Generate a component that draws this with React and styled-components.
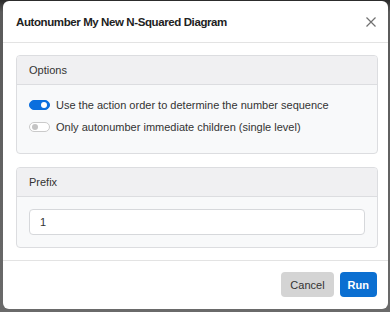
import React from 'react'
import styled, { createGlobalStyle } from 'styled-components'

const GlobalStyle = createGlobalStyle`
  html, body {
    margin: 0;
    padding: 0;
    background: #4d4d4d;
    font-family: "Liberation Sans", Arial, sans-serif;
  }
`

const Backdrop = styled.div`
  width: 390px;
  height: 312px;
  padding: 1px 2px 3px 3px;
  box-sizing: border-box;
  background: linear-gradient(180deg, #2a2a2a 0px, #5a5a5a 12px, #6a6a6a 100%);
`

const Modal = styled.div`
  height: 100%;
  background: #fff;
  border-radius: 6px;
  display: flex;
  flex-direction: column;
  overflow: hidden;
`

const Header = styled.div`
  height: 41px;
  display: flex;
  align-items: center;
  justify-content: space-between;
  padding: 0 12px 0 13px;
  border-bottom: 1px solid #e3e3e3;
`

const Title = styled.h1`
  margin: 0;
  font-size: 11.5px;
  font-weight: bold;
  letter-spacing: -0.4px;
  color: #222;
`

const Close = styled.button`
  border: none;
  background: none;
  padding: 0;
  width: 10px;
  height: 10px;
  display: flex;
`

const Body = styled.div`
  flex: 1;
  padding: 12px 10px 12px 13px;
  display: flex;
  flex-direction: column;
  gap: 13px;
`

const Card = styled.div`
  border: 1px solid #dcdde0;
  border-radius: 4px;
  background: #f8f9fa;
  overflow: hidden;
`

const CardHeader = styled.div`
  height: 28px;
  display: flex;
  align-items: center;
  padding: 0 12px;
  background: #f0f0f2;
  border-bottom: 1px solid #dcdde0;
  font-size: 11px;
  color: #333;
`

const CardBody = styled.div`
  padding: ${(p) => p.$pad || '12px'};
  display: flex;
  flex-direction: column;
  gap: ${(p) => p.$gap || '0'};
`

const Row = styled.label`
  display: flex;
  align-items: center;
  gap: 6px;
  font-size: 11px;
  color: #333;
  height: 16px;
`

const Toggle = styled.span`
  flex: none;
  width: 21px;
  height: 10px;
  border-radius: 6px;
  box-sizing: border-box;
  position: relative;
  background: ${(p) => (p.$on ? '#0b6fde' : '#fff')};
  border: 1px solid ${(p) => (p.$on ? '#0b6fde' : '#cacaca')};

  &::after {
    content: '';
    position: absolute;
    top: 1px;
    ${(p) => (p.$on ? 'right: 2px;' : 'left: 2px;')}
    width: 6px;
    height: 6px;
    border-radius: 50%;
    background: ${(p) => (p.$on ? '#fff' : '#c4c4c4')};
  }
`

const Input = styled.input`
  box-sizing: border-box;
  width: 100%;
  height: 26px;
  border: 1px solid #d6d8db;
  border-radius: 4px;
  background: #fff;
  padding: 0 10px;
  font-family: inherit;
  font-size: 11px;
  color: #333;
  outline: none;
`

const Footer = styled.div`
  height: 47px;
  border-top: 1px solid #e3e3e3;
  display: flex;
  align-items: center;
  justify-content: flex-end;
  gap: 6px;
  padding: 0 11px 1px 0;
`

const Button = styled.button`
  height: 25px;
  padding: 0 ${(p) => (p.$primary ? '8px' : '9px')};
  border: none;
  border-radius: 4px;
  font-family: inherit;
  font-size: 11px;
  font-weight: ${(p) => (p.$primary ? 'bold' : 'normal')};
  background: ${(p) => (p.$primary ? '#0b6fd1' : '#d4d4d4')};
  color: ${(p) => (p.$primary ? '#fff' : '#333')};
`

const App = () => (
  <>
    <GlobalStyle />
    <Backdrop>
      <Modal>
        <Header>
          <Title>Autonumber My New N-Squared Diagram</Title>
          <Close aria-label="Close">
            <svg width="10" height="10" viewBox="0 0 10 10">
              <path d="M0.5 0.5 L9.5 9.5 M9.5 0.5 L0.5 9.5" stroke="#707070" strokeWidth="1.2" />
            </svg>
          </Close>
        </Header>
        <Body>
          <Card>
            <CardHeader>Options</CardHeader>
            <CardBody $pad="12px 12px 18px" $gap="6px">
              <Row>
                <Toggle $on />
                Use the action order to determine the number sequence
              </Row>
              <Row>
                <Toggle />
                Only autonumber immediate children (single level)
              </Row>
            </CardBody>
          </Card>
          <Card>
            <CardHeader>Prefix</CardHeader>
            <CardBody $pad="12px 12px 12px">
              <Input defaultValue="1" />
            </CardBody>
          </Card>
        </Body>
        <Footer>
          <Button>Cancel</Button>
          <Button $primary>Run</Button>
        </Footer>
      </Modal>
    </Backdrop>
  </>
)

export default App
